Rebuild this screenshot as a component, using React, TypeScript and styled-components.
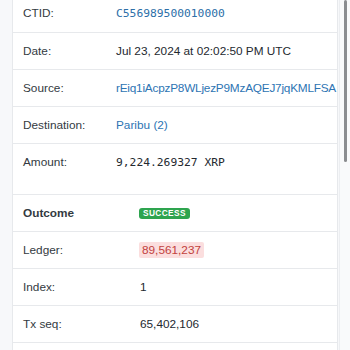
import React from "react";
import styled, { createGlobalStyle } from "styled-components";

const Global = createGlobalStyle`
  html, body { margin: 0; padding: 0; background: #f7f8fa; overflow: hidden; }
  body { font-family: "Liberation Sans", Arial, sans-serif; }
`;

const Page = styled.div`
  display: flex;
  width: 350px;
  height: 350px;
  overflow: hidden;
  position: relative;
`;

const Gutter = styled.div<{ $w: number }>`
  flex: 0 0 ${(p) => p.$w}px;
  background: #f7f8fa;
`;

const Card = styled.div`
  flex: 1;
  min-width: 0;
  background: #ffffff;
  border-left: 1px solid #e7e9ec;
  border-right: 1px solid #e7e9ec;
  overflow: hidden;
`;

const Scroller = styled.div`
  margin-top: -5px;
`;

const Row = styled.div<{ $col: number; $extra?: number }>`
  display: grid;
  grid-template-columns: ${(p) => p.$col}px 1fr;
  align-items: start;
  padding: 10px 0 ${(p) => 10 + (p.$extra ?? 0)}px 10px;
  border-bottom: 1px solid #e7e9ec;
  line-height: 16px;
  font-size: 11.8px;
  white-space: nowrap;
`;

const Label = styled.div<{ $bold?: boolean }>`
  color: #333a41;
  font-weight: ${(p) => (p.$bold ? 700 : 400)};
`;

const Value = styled.div`
  color: #24292f;
  min-width: 0;
`;

const Link = styled.span<{ $tight?: boolean }>`
  color: #2d74b3;
  letter-spacing: ${(p) => (p.$tight ? "-0.22px" : "normal")};
`;

const Mono = styled.span<{ $link?: boolean }>`
  font-family: "DejaVu Sans Mono", "Liberation Mono", monospace;
  font-size: 11.3px;
  color: ${(p) => (p.$link ? "#2d6fa8" : "#24292f")};
`;

const SuccessBadge = styled.span`
  display: inline-block;
  background: #2ea44f;
  color: #fff;
  font-weight: 700;
  font-size: 8.3px;
  letter-spacing: 0.4px;
  line-height: 11px;
  padding: 0 4px;
  border-radius: 3px;
  vertical-align: middle;
  margin-left: -1px;
`;

const LedgerBadge = styled.span`
  display: inline-block;
  background: #fbdede;
  color: #c2413d;
  padding: 0 3px;
  line-height: 16px;
  border-radius: 2px;
  margin-left: -1px;
`;

const ScrollTrack = styled.div`
  position: absolute;
  top: 0;
  right: 0;
  width: 10px;
  height: 350px;
  border-left: 1px solid #eceef1;
  background: #f9fafb;
`;

const ScrollThumb = styled.div`
  position: absolute;
  top: 0;
  left: 4px;
  width: 3px;
  height: 162px;
  border-radius: 2px;
  background: #8b8d90;
`;

export default function App() {
  return (
    <>
      <Global />
      <Page>
        <Gutter $w={12} />
        <Card>
          <Scroller>
            <Row $col={93}>
              <Label>CTID:</Label>
              <Value>
                <Mono $link>C556989500010000</Mono>
              </Value>
            </Row>
            <Row $col={93}>
              <Label>Date:</Label>
              <Value>Jul 23, 2024 at 02:02:50 PM UTC</Value>
            </Row>
            <Row $col={93}>
              <Label>Source:</Label>
              <Value>
                <Link $tight>rEiq1iAcpzP8WLjezP9MzAQEJ7jqKMLFSA</Link>
              </Value>
            </Row>
            <Row $col={93}>
              <Label>Destination:</Label>
              <Value>
                <Link>Paribu (2)</Link>
              </Value>
            </Row>
            <Row $col={93} $extra={13}>
              <Label>Amount:</Label>
              <Value>
                <Mono>9,224.269327 XRP</Mono>
              </Value>
            </Row>
            <Row $col={117}>
              <Label $bold>Outcome</Label>
              <Value>
                <SuccessBadge>SUCCESS</SuccessBadge>
              </Value>
            </Row>
            <Row $col={117}>
              <Label>Ledger:</Label>
              <Value>
                <LedgerBadge>89,561,237</LedgerBadge>
              </Value>
            </Row>
            <Row $col={117}>
              <Label>Index:</Label>
              <Value>1</Value>
            </Row>
            <Row $col={117}>
              <Label>Tx seq:</Label>
              <Value>65,402,106</Value>
            </Row>
          </Scroller>
        </Card>
        <Gutter $w={12} />
        <ScrollTrack>
          <ScrollThumb />
        </ScrollTrack>
      </Page>
    </>
  );
}
